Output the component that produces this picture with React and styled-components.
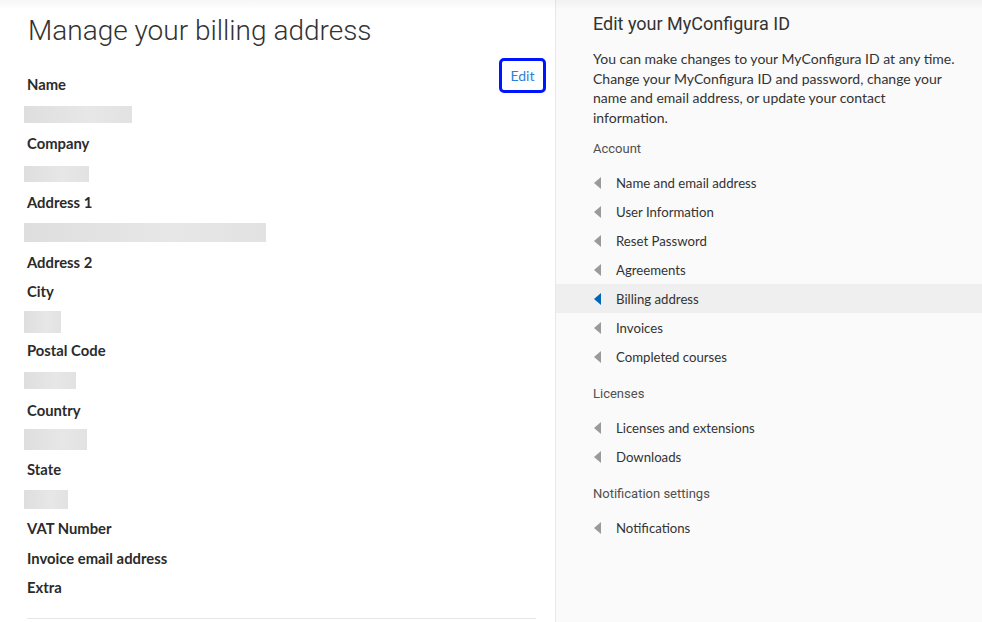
import React from "react";
import styled, { createGlobalStyle } from "styled-components";

const GlobalStyle = createGlobalStyle`
  html, body {
    margin: 0;
    padding: 0;
    background: #fff;
  }
  body {
    font-family: Lato, "Noto Sans", sans-serif;
    color: #333;
  }
`;

const Page = styled.div`
  display: grid;
  grid-template-columns: 555px 1fr;
  height: 622px;
  overflow: hidden;
  position: relative;

  &:before {
    content: "";
    position: absolute;
    left: 0;
    right: 0;
    top: 0;
    height: 10px;
    background: linear-gradient(rgba(0, 0, 0, 0.035), rgba(0, 0, 0, 0));
    pointer-events: none;
  }
`;

const Main = styled.main`
  padding: 12px 20px 0 27px;
  display: flex;
  flex-direction: column;
`;

const Title = styled.h1`
  margin: 0 0 0 1px;
  font-family: Roboto, "Liberation Sans", sans-serif;
  font-weight: 300;
  font-size: 28px;
  line-height: 37px;
  color: #333;
`;

const Details = styled.section`
  display: flex;
  justify-content: space-between;
  align-items: flex-start;
  margin-top: 21px;
  padding-bottom: 15px;
  border-bottom: 1px solid #e6e6e6;
  margin-right: -1px;
`;

const Fields = styled.dl`
  margin: 0;
  display: flex;
  flex-direction: column;
`;

const Label = styled.dt`
  height: 29.6px;
  line-height: 29.6px;
  font-size: 14.8px;
  font-weight: 700;
  color: #2b2b2b;
`;

const Value = styled.dd`
  margin: 0 0 0 -3px;
  height: 29.6px;
  display: flex;
  align-items: center;
`;

/* masked value, drawn as a grey bar */
const Redacted = styled.span`
  display: block;
  width: ${(p) => p.$w}px;
  height: ${(p) => p.$h}px;
  background: linear-gradient(90deg, #dedede, #e7e7e7 60%, #e2e2e2);
`;

const EditButton = styled.button`
  margin-top: -12px;
  margin-right: -10px;
  width: 47px;
  height: 35px;
  border: 3px solid #0015ff;
  border-radius: 5px;
  background: #fff;
  color: #2b7fdc;
  font-family: inherit;
  font-size: 14px;
  padding: 0;
  cursor: pointer;
`;

const Aside = styled.aside`
  background: #fafafa;
  border-left: 1px solid #e8e8e8;
  padding-top: 12px;
`;

const SideTitle = styled.h2`
  margin: 0 37px;
  font-family: Roboto, "Liberation Sans", sans-serif;
  font-weight: 400;
  font-size: 18px;
  line-height: 24px;
  color: #333;
`;

const Intro = styled.p`
  margin: 13px 20px 7px 37px;
  font-size: 14px;
  line-height: 19.5px;
  color: #333;
`;

const Group = styled.h3`
  margin: 0;
  padding: 0 37px;
  height: 34px;
  line-height: 30px;
  font-family: Roboto, "Liberation Sans", sans-serif;
  font-weight: 400;
  font-size: 13px;
  color: #505050;
`;

const NavList = styled.ul`
  list-style: none;
  margin: 0 0 8px;
  padding: 0;
`;

const NavItem = styled.li`
  display: flex;
  align-items: center;
  gap: 15px;
  height: 29px;
  padding-left: 38px;
  font-size: 13.2px;
  color: #333;
  background: ${(p) => (p.$active ? "#efefef" : "transparent")};
`;

const Caret = ({ active }) => (
  <svg width="7" height="12" viewBox="0 0 7 12">
    <path d="M7 0 L0 6 L7 12 Z" fill={active ? "#0067b8" : "#9a9a9a"} />
  </svg>
);

const fields = [
  { label: "Name", value: [108, 17] },
  { label: "Company", value: [65, 16] },
  { label: "Address 1", value: [242, 19] },
  { label: "Address 2" },
  { label: "City", value: [37, 22] },
  { label: "Postal Code", value: [52, 17] },
  { label: "Country", value: [63, 21] },
  { label: "State", value: [44, 19] },
  { label: "VAT Number" },
  { label: "Invoice email address" },
  { label: "Extra" },
];

const nav = [
  {
    group: "Account",
    items: [
      "Name and email address",
      "User Information",
      "Reset Password",
      "Agreements",
      "Billing address",
      "Invoices",
      "Completed courses",
    ],
  },
  { group: "Licenses", items: ["Licenses and extensions", "Downloads"] },
  { group: "Notification settings", items: ["Notifications"] },
];

export default function App() {
  return (
    <>
      <GlobalStyle />
      <Page>
        <Main>
          <Title>Manage your billing address</Title>
          <Details>
            <Fields>
              {fields.map((f) => (
                <React.Fragment key={f.label}>
                  <Label>{f.label}</Label>
                  {f.value && (
                    <Value>
                      <Redacted $w={f.value[0]} $h={f.value[1]} />
                    </Value>
                  )}
                </React.Fragment>
              ))}
            </Fields>
            <EditButton>Edit</EditButton>
          </Details>
        </Main>
        <Aside>
          <SideTitle>Edit your MyConfigura ID</SideTitle>
          <Intro>
            You can make changes to your MyConfigura ID at any time. Change your
            MyConfigura ID and password, change your name and email address, or
            update your contact information.
          </Intro>
          {nav.map((g) => (
            <React.Fragment key={g.group}>
              <Group>{g.group}</Group>
              <NavList>
                {g.items.map((item) => (
                  <NavItem key={item} $active={item === "Billing address"}>
                    <Caret active={item === "Billing address"} />
                    {item}
                  </NavItem>
                ))}
              </NavList>
            </React.Fragment>
          ))}
        </Aside>
      </Page>
    </>
  );
}
